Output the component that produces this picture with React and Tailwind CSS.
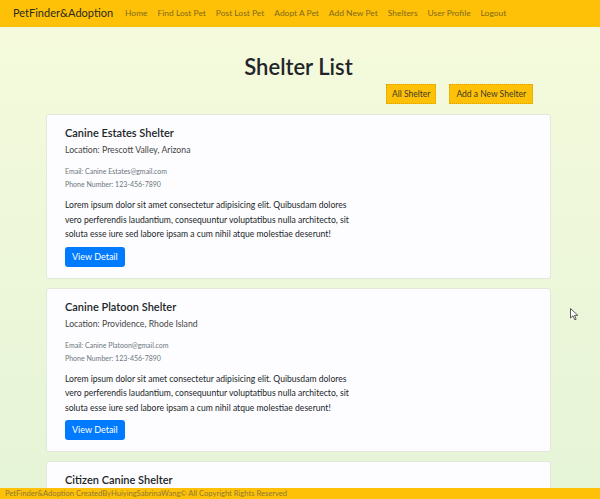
import React from "react";

const links = ["Home", "Find Lost Pet", "Post Lost Pet", "Adopt A Pet", "Add New Pet", "Shelters", "User Profile", "Logout"];

const shelters = [
  { name: "Canine Estates Shelter", location: "Prescott Valley, Arizona", email: "Canine Estates@gmail.com" },
  { name: "Canine Platoon Shelter", location: "Providence, Rhode Island", email: "Canine Platoon@gmail.com" },
  { name: "Citizen Canine Shelter", location: "Austin, Texas", email: "Citizen Canine@gmail.com" },
];

const ShelterCard = ({ shelter }) => (
  <div className="w-[505px] shrink-0 bg-[#fdfdff] border border-[#e3e8dc] rounded-[3px] pl-[18px] pt-[9px] pb-[11px]">
    <h3 className="text-[11px] leading-[18px] font-semibold text-[#212529]">{shelter.name}</h3>
    <p className="mt-[0px] text-[8.7px] leading-[16px] text-[#454545]">Location: {shelter.location}</p>
    <p className="mt-[7px] text-[7px] leading-[12px] text-[#6c757d]">Email: {shelter.email}</p>
    <p className="mt-[1px] text-[7px] leading-[12px] text-[#6c757d]">Phone Number: 123-456-7890</p>
    <p className="mt-[8px] w-[300px] text-[8.6px] leading-[14.5px] text-[#212529]">
      Lorem ipsum dolor sit amet consectetur adipisicing elit. Quibusdam dolores vero perferendis laudantium,
      consequuntur voluptatibus nulla architecto, sit soluta esse iure sed labore ipsam a cum nihil atque molestiae
      deserunt!
    </p>
    <button className="mt-[5px] h-[20px] px-[7px] rounded-[3px] bg-[#007bff] text-white text-[9px]">View Detail</button>
  </div>
);

export default function App() {
  return (
    <div className="relative h-[499px] w-[600px] flex flex-col overflow-hidden" style={{ fontFamily: 'Lato, "Open Sans", sans-serif' }}>
      {/* Navbar */}
      <nav className="h-[27px] shrink-0 bg-[#ffc107] flex items-center pl-[13px]">
        <span className="text-[11px] text-[#2a2a1a] mr-[7px]">PetFinder&amp;Adoption</span>
        <div className="flex">
          {links.map((l) => (
            <a key={l} className="px-[5px] text-[8.45px] text-[#806a1c]">{l}</a>
          ))}
        </div>
      </nav>

      {/* Content */}
      <main className="flex-1 overflow-hidden bg-gradient-to-b from-[#f5fadc] to-[#e6f4d8] flex flex-col pl-[46px]">
        <h1 className="w-[505px] text-center mt-[25px] text-[22px] leading-[30px] font-semibold text-[#212529]">Shelter List</h1>
        <div className="w-[505px] flex justify-end gap-[13px] pr-[18px] mt-[2px]">
          <button className="h-[20px] px-[5px] bg-[#ffc107] border border-dotted border-[#d9a400] text-[8.5px] text-[#3a3a2a]">All Shelter</button>
          <button className="h-[20px] px-[6px] bg-[#ffc107] border border-dotted border-[#d9a400] text-[8.5px] text-[#3a3a2a]">Add a New Shelter</button>
        </div>
        <div className="mt-[10px] flex flex-col gap-[9px]">
          {shelters.map((s) => (
            <ShelterCard key={s.name} shelter={s} />
          ))}
        </div>
      </main>

      {/* Footer */}
      <footer className="h-[11px] shrink-0 bg-[#ffc107] flex items-center pl-[5px] overflow-hidden">
        <span className="text-[7.6px] leading-[11px] whitespace-nowrap text-[#8a7a3a]">PetFinder&amp;Adoption CreatedByHuiyingSabrinaWang© All Copyright Rights Reserved</span>
      </footer>

      {/* Mouse cursor */}
      <svg className="absolute left-[570px] top-[308px]" width="9" height="13" viewBox="0 0 9 13">
        <path d="M0.5 0.5 L0.5 10 L3 7.8 L4.8 11.8 L6.2 11.2 L4.5 7.3 L7.8 7.3 Z" fill="#fff" stroke="#333" strokeWidth="0.8" />
      </svg>
    </div>
  );
}
